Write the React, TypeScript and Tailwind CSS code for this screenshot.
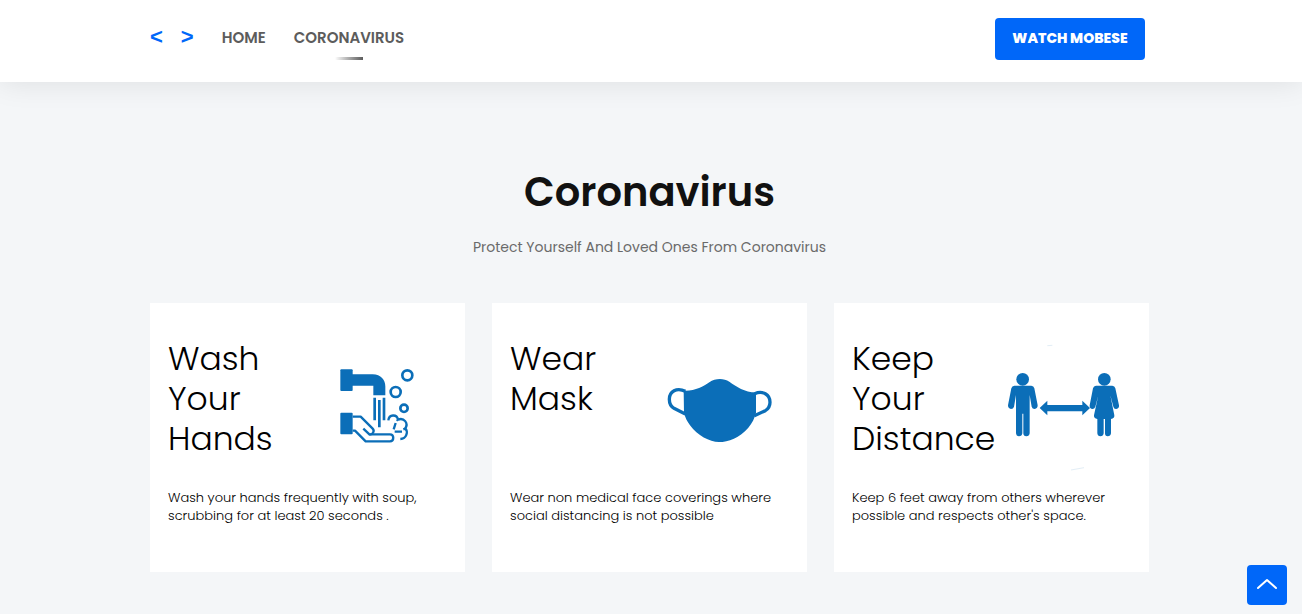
import type { ReactNode } from "react";

const BLUE = "#0b6eb8";

function WashIcon() {
  return (
    <svg viewBox="-48 -63 390 360" className="h-[120px] w-[130px] shrink-0" fill="none" stroke={BLUE} aria-hidden="true">
      <g fill={BLUE} stroke="none">
        <rect x="31" y="28" width="37" height="65" rx="3" />
        <path d="M66 43H128C153 43 166 60 166 79V106H130V77H66Z" />
        <rect x="31" y="158" width="37" height="65" rx="3" />
      </g>
      <g strokeWidth="8">
        <path d="M134 113V181M148 120V202M162 113V181" />
        <circle cx="232" cy="46" r="15" />
        <circle cx="197" cy="96" r="15" />
        <circle cx="222" cy="145" r="11" />
      </g>
      <g strokeWidth="7" strokeLinejoin="round">
        <path d="M68 170H92L128 206C135 213 128 224 119 224L100 206" />
        <path d="M120 223H180C193 223 193 244 180 244H107L75 212H68" />
        <path d="M175 181C177 162 201 162 204 179C222 172 236 189 226 205C235 216 230 236 211 237" />
        <path d="M200 179L204 181M197 189L191 208M194 215H216M220 208L228 205" />
      </g>
    </svg>
  );
}

function MaskIcon() {
  return (
    <svg viewBox="3 -78 390 360" className="h-[120px] w-[130px] shrink-0" fill="none" stroke={BLUE} aria-hidden="true">
      <path
        fill={BLUE}
        stroke="none"
        d="M86 77C118 79 145 65 163 52C181 39 206 39 223 50C245 65 268 82 303 82V143C299 160 291 174 280 188C254 219 220 231 192 231C163 231 128 212 105 181C96 169 91 158 87 144Z"
      />
      <path strokeWidth="10" d="M91 79C65 66 43 80 43 103C43 117 48 125 57 130L91 147" />
      <path strokeWidth="10" d="M299 86C323 76 345 88 345 112C345 124 340 132 331 137L298 152" />
    </svg>
  );
}

function DistanceIcon() {
  return (
    <svg viewBox="-6 12 390 360" className="h-[120px] w-[130px] shrink-0 overflow-visible" fill={BLUE} aria-hidden="true">
      <circle cx="68" cy="133" r="19" />
      <path d="M43 152H94Q101 152 103 160L113 211Q113 221 104 222Q97 222 95 215L89 180V295Q88 304 79 304Q70 304 70 295V236H67V295Q66 304 57 304Q49 304 48 295V180L42 215Q40 222 33 222Q24 221 24 211L34 160Q36 152 43 152Z" />
      <circle cx="313" cy="133" r="19" />
      <path d="M288 152H337Q344 152 346 160L357 211Q358 221 349 222Q342 223 340 215L331 181L343 241Q344 251 333 252V295Q332 304 323 304Q315 304 315 295V252H311V295Q310 304 301 304Q293 304 292 295V252Q281 251 282 241L295 181L286 215Q283 223 276 222Q268 220 269 211L279 160Q281 152 288 152Z" />
      <path d="M119 219L142 197V210H247V197L270 219L247 241V229H142V241Z" />
      <path d="M142 32L157 31M213 405L252 398" stroke="#e3eef6" strokeWidth="3" />
    </svg>
  );
}

const tips: { title: string; text: string; icon: ReactNode }[] = [
  {
    title: "Wash Your Hands",
    text: "Wash your hands frequently with soup, scrubbing for at least 20 seconds .",
    icon: <WashIcon />,
  },
  {
    title: "Wear Mask",
    text: "Wear non medical face coverings where social distancing is not possible",
    icon: <MaskIcon />,
  },
  {
    title: "Keep Your Distance",
    text: "Keep 6 feet away from others wherever possible and respects other's space.",
    icon: <DistanceIcon />,
  },
];

export default function App() {
  return (
    <div className="min-h-screen bg-[#f4f6f8] font-['Poppins','Inter',sans-serif] text-[#111]">
      <header className="bg-white shadow-[0_0_30px_rgba(0,0,0,0.1)]">
        <div className="mx-auto flex h-[82px] max-w-[1002px] items-start justify-between pr-[7px] pt-[18px]">
          <nav className="flex gap-7 text-[15px] leading-10 font-semibold text-[#5c5c5c]">
            <a
              href="#top"
              className="flex gap-[18px] font-['Liberation_Sans',sans-serif] text-[22px] leading-[38px] font-bold text-[#0067f9]"
              aria-label="Start page"
            >
              <span>&lt;</span>
              <span>&gt;</span>
            </a>
            <a href="#home">HOME</a>
            <a href="#coronavirus" className="flex flex-col items-center">
              CORONAVIRUS
              <span className="-mt-px h-[3px] w-7 bg-linear-to-r from-white to-[#5c5c5c]" />
            </a>
          </nav>
          <button type="button" className="h-[42px] w-[150px] rounded-[4px] bg-[#0067f9] pb-0.5 text-sm font-extrabold text-white">
            WATCH MOBESE
          </button>
        </div>
      </header>

      <main className="mx-auto max-w-[1002px] pr-[3px] pt-[85px] pb-10">
        <div className="text-center">
          <h1 className="text-[40px] leading-[50px] font-semibold">Coronavirus</h1>
          <p className="mt-[18px] text-sm leading-6 text-[#6a6a6a]">
            Protect Yourself And Loved Ones From Coronavirus
          </p>
        </div>
        <div className="mt-11 grid grid-cols-3 gap-[27px]">
          {tips.map((tip) => (
            <article key={tip.title} className="bg-white px-[18px] pt-9 pb-[47px]">
              <div className="flex justify-between pr-[3px]">
                <h2 className="w-0 text-[33px] leading-10 font-light text-black">{tip.title}</h2>
                {tip.icon}
              </div>
              <p className="mt-[30px] text-[13px] leading-[18px] font-light text-black">{tip.text}</p>
            </article>
          ))}
        </div>
      </main>

      <button
        type="button"
        aria-label="Back to top"
        className="fixed right-[15px] bottom-[9px] flex size-10 items-center justify-center rounded-[4px] bg-[#0067f9] pb-0.5 text-white"
      >
        <svg viewBox="0 0 20 12" className="h-3 w-5" fill="none" stroke="currentColor" strokeWidth="2" strokeLinecap="round" strokeLinejoin="round" aria-hidden="true">
          <path d="M1 10L10 2L19 10" />
        </svg>
      </button>
    </div>
  );
}
